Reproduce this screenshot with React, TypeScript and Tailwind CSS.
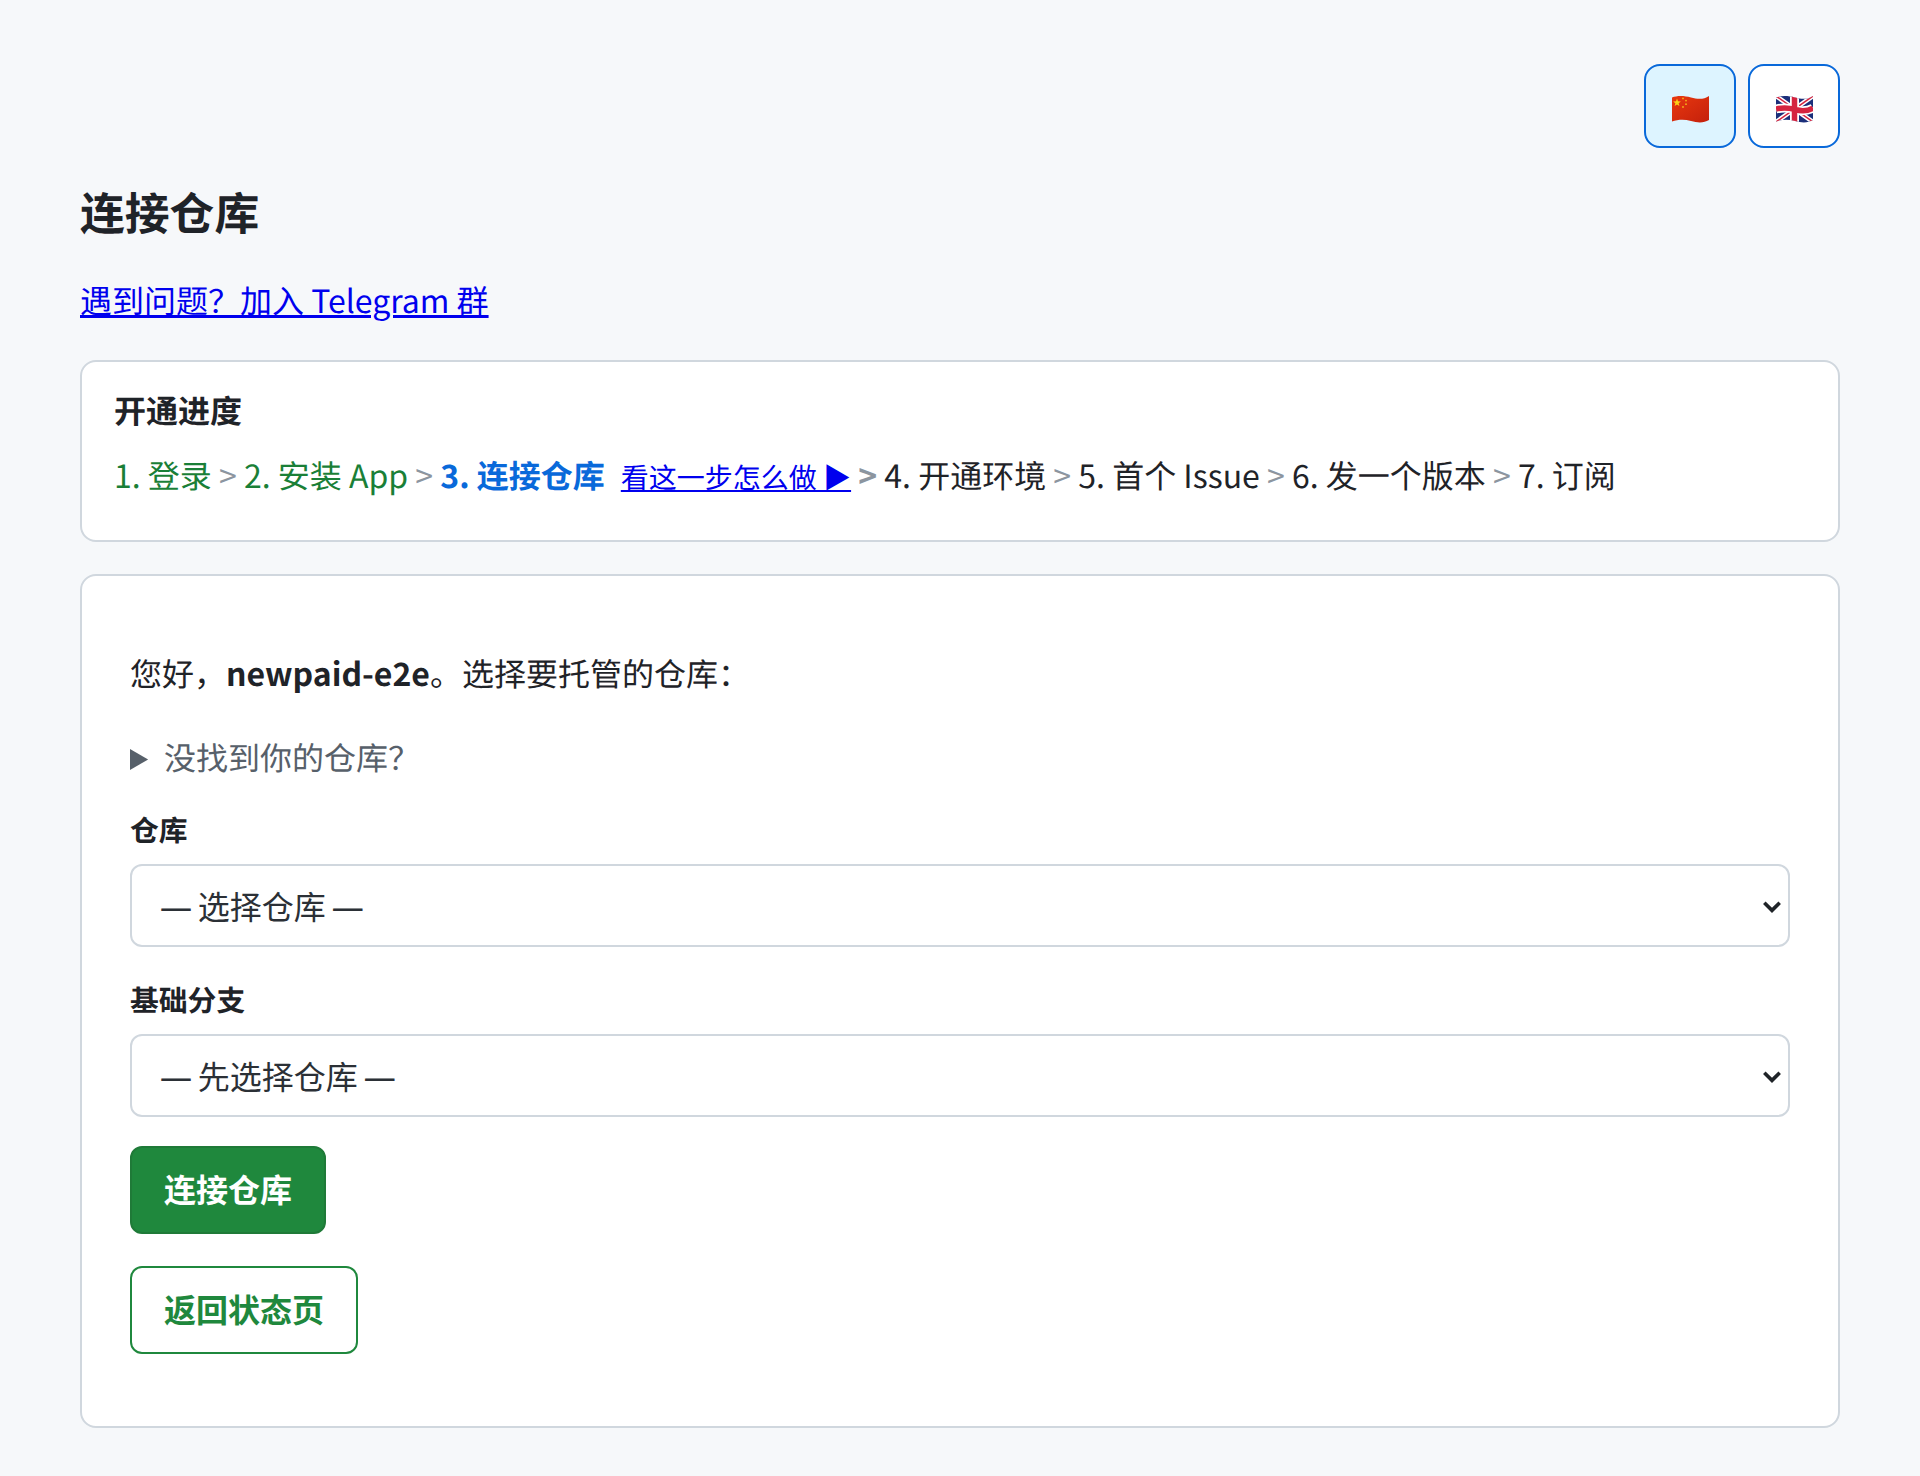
import React from "react";

const wave = "M0 2.5C5 0.5 12 0.5 19 2.5S32 4.5 37 1V25C32 28 26 28 19 26S6 24.5 0 26.5Z";

function ChinaFlag() {
  return (
    <svg viewBox="0 0 37 28" className="h-[28px] w-[37px]">
      <defs>
        <linearGradient id="cn" x1="0" y1="0" x2="1" y2="1">
          <stop offset="0" stopColor="#e8380f" />
          <stop offset="1" stopColor="#c4200c" />
        </linearGradient>
      </defs>
      <path d={wave} fill="url(#cn)" />
      <path d="M5 3.6l1 2.7 2.9.1-2.3 1.8.8 2.8-2.4-1.6-2.4 1.6.8-2.8-2.3-1.8 2.9-.1Z" fill="#fcd116" />
      <circle cx="11" cy="3.4" r="0.9" fill="#f6b21a" />
      <circle cx="14" cy="5.6" r="0.9" fill="#f6b21a" />
      <circle cx="14" cy="9.2" r="0.9" fill="#f6b21a" />
      <circle cx="11" cy="12" r="0.9" fill="#f6b21a" />
    </svg>
  );
}

function UkFlag() {
  return (
    <svg viewBox="0 0 37 28" className="h-[28px] w-[37px]">
      <defs>
        <clipPath id="uk">
          <path d={wave} />
        </clipPath>
      </defs>
      <g clipPath="url(#uk)">
        <rect width="37" height="28" fill="#1b2f7a" />
        <path d="M0 1L37 27M37 1L0 27" stroke="#fff" strokeWidth="4.5" fill="none" />
        <path d="M0 1L37 27M37 1L0 27" stroke="#d5243f" strokeWidth="1.5" fill="none" />
        <path d="M0 14C6 12.5 12 12.5 19 14.5S32 16 37 13M18.5 0V28" stroke="#fff" strokeWidth="9" fill="none" />
        <path d="M0 14C6 12.5 12 12.5 19 14.5S32 16 37 13M18.5 0V28" stroke="#d5243f" strokeWidth="5.5" fill="none" />
      </g>
    </svg>
  );
}

function Step({ color, children }: { color: string; children: React.ReactNode }) {
  return <span className={color}>{children}</span>;
}

function Sep() {
  return <span className="mx-[7.2px] text-[#8c959f]">&gt;</span>;
}

function Picker({ label }: { label: string }) {
  return (
    <div className="relative mt-[14px]">
      <select className="block h-[83px] w-full appearance-none rounded-xl border-2 border-[#d0d7de] bg-white px-[28px] pt-[2px] text-[32px] text-[#2b3036] [word-spacing:-2.5px] font-['Noto_Sans','Noto_Sans_CJK_SC',sans-serif]">
        <option>{label}</option>
      </select>
      <svg viewBox="0 0 18 12" className="absolute right-[9px] top-[37px] h-[12px] w-[18px]">
        <path d="M1.3 1.8L9 9.4L16.7 1.8" stroke="#1f2328" strokeWidth="3.6" fill="none" />
      </svg>
    </div>
  );
}

export default function App() {
  return (
    <div className="min-h-[1476px] bg-[#f6f8fa] px-20 pt-16 pb-[49px] text-[32px] text-[#1f2328] font-['Noto_Sans_CJK_SC',sans-serif] [text-rendering:geometricPrecision]">
      <div className="flex justify-end gap-3">
        <button className="flex h-[84px] w-[92px] items-center justify-center rounded-2xl border-2 border-[#0969da] bg-[#ddf4ff] pt-[6px]">
          <ChinaFlag />
        </button>
        <button className="flex h-[84px] w-[92px] items-center justify-center rounded-2xl border-2 border-[#0969da] bg-white pt-[6px]">
          <UkFlag />
        </button>
      </div>

      <h1 className="mt-[33px] text-[44.8px] font-bold leading-[60px]">连接仓库</h1>
      <p className="mt-9 leading-[46px]">
        <a href="#" className="text-[#0000ee] underline">遇到问题？加入 Telegram 群</a>
      </p>

      <div className="mt-[37px] h-[182px] rounded-2xl border-2 border-[#d0d7de] bg-white px-8 pt-[25px]">
        <div className="font-bold leading-[46px]">开通进度</div>
        <div className="mt-[19px] leading-[46px]">
          <Step color="text-[#1a7f37]">1. 登录</Step>
          <Sep />
          <Step color="text-[#1a7f37]">2. 安装 App</Step>
          <Sep />
          <strong className="text-[#0969da]">3. 连接仓库</strong>
          <a href="#" className="ml-4 text-[28px] font-normal text-[#0000ee] underline">看这一步怎么做 ▶</a>
          <strong className="mx-[7.2px] text-[#8c959f]">&gt;</strong>
          <Step color="text-[#1f2328]">4. 开通环境</Step>
          <Sep />
          <Step color="text-[#1f2328]">5. 首个 Issue</Step>
          <Sep />
          <Step color="text-[#1f2328]">6. 发一个版本</Step>
          <Sep />
          <Step color="text-[#1f2328]">7. 订阅</Step>
        </div>
      </div>

      <div className="mt-8 rounded-2xl border-2 border-[#d0d7de] bg-white px-12 pt-[74px] pb-[72px]">
        <p className="leading-[46px]">
          您好，<strong>newpaid-e2e</strong>。选择要托管的仓库：
        </p>
        <details className="mt-[38px] text-[#57606a]">
          <summary className="leading-[46px]">没找到你的仓库？</summary>
        </details>

        <label className="mt-[30px] block text-[28.8px] font-bold leading-[40px]">仓库</label>
        <Picker label="— 选择仓库 —" />

        <label className="mt-[33px] block text-[28.8px] font-bold leading-[40px]">基础分支</label>
        <Picker label="— 先选择仓库 —" />

        <button className="mt-[29px] block h-[88px] rounded-xl border-2 border-[#1f7a38] bg-[#1f883d] px-8 pb-1 font-bold text-white">
          连接仓库
        </button>
        <button className="mt-8 block h-[88px] rounded-xl border-2 border-[#1f883d] bg-white px-8 pb-1 font-bold text-[#1f883d]">
          返回状态页
        </button>
      </div>
    </div>
  );
}
